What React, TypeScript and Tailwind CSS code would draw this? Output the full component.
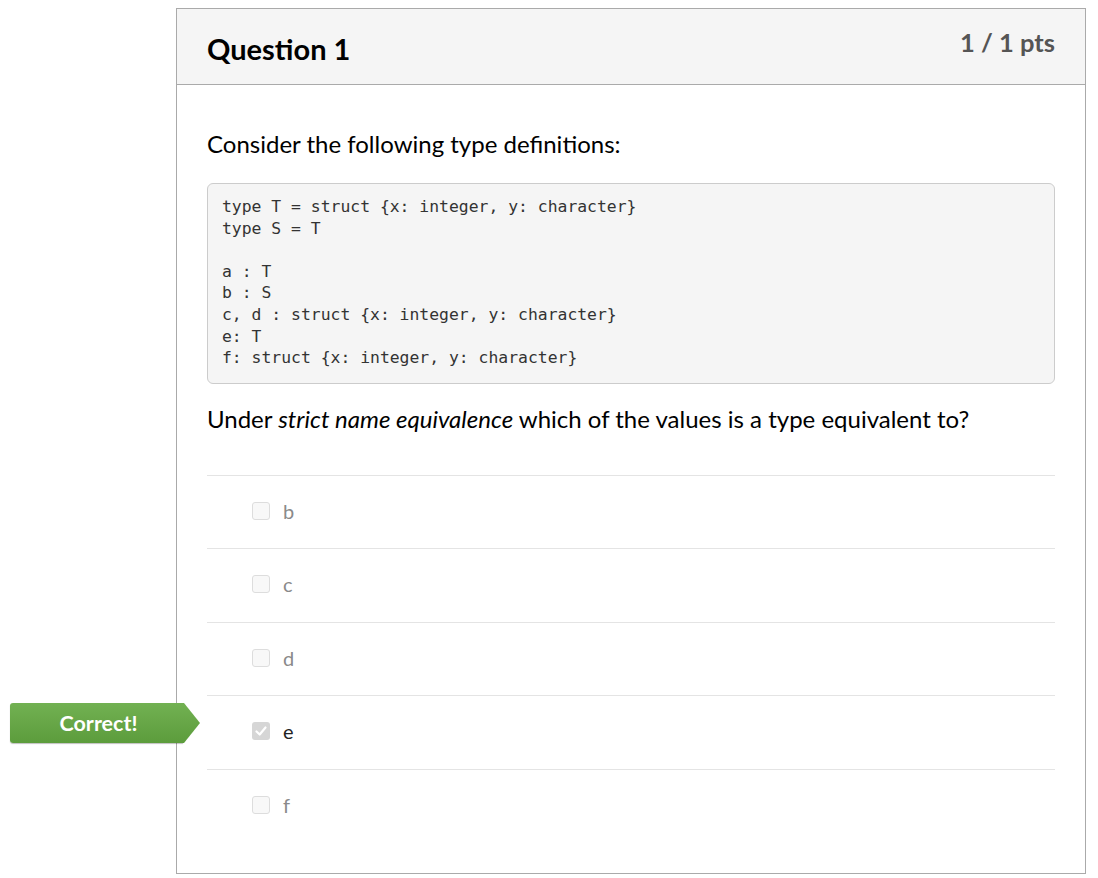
import React from 'react';

const code = `type T = struct {x: integer, y: character}
type S = T

a : T
b : S
c, d : struct {x: integer, y: character}
e: T
f: struct {x: integer, y: character}`;

const answers = [
  { label: 'b', checked: false },
  { label: 'c', checked: false },
  { label: 'd', checked: false },
  { label: 'e', checked: true },
  { label: 'f', checked: false },
];

function CorrectBadge() {
  return (
    <div className="absolute left-[-197px] top-[7px] flex h-[40px] w-[190px] items-center">
      <div className="flex h-full w-[173px] items-center justify-center rounded-l-[3px] bg-gradient-to-b from-[#72b152] to-[#5c9c3c] pl-[4px] text-[21.5px] font-bold text-white shadow-[0_1px_1px_rgba(0,0,0,0.25)]">
        Correct!
      </div>
      <svg width="17" height="40" viewBox="0 0 17 40" className="block">
        <defs>
          <linearGradient id="g" x1="0" y1="0" x2="0" y2="1">
            <stop offset="0" stopColor="#72b152" />
            <stop offset="1" stopColor="#5c9c3c" />
          </linearGradient>
        </defs>
        <polygon points="0,0 1,0 17,20 1,40 0,40" fill="url(#g)" />
      </svg>
    </div>
  );
}

export default function App() {
  return (
    <div className="min-h-screen bg-white pt-[8px] pl-[176px]" style={{ fontFamily: 'Lato, "Open Sans", sans-serif' }}>
      <div className="w-[910px] border border-[#aaaaaa] bg-white">
        {/* header */}
        <div className="flex h-[76px] items-start justify-between border-b border-[#aaaaaa] bg-[#f5f5f5] pl-[30px] pr-[30px]">
          <h2 className="mt-[22px] text-[29px] font-bold leading-[36px] text-black">Question 1</h2>
          <div className="mt-[17px] text-[25.5px] font-bold leading-[32px] text-[#555555]">1 / 1 pts</div>
        </div>

        {/* body */}
        <div className="px-[30px] pt-[44px] pb-[31px]">
          <p className="text-[24px] leading-[30px] text-black">Consider the following type definitions:</p>
          <pre
            className="mt-[24px] rounded-[6px] border border-[#cccccc] bg-[#f5f5f5] px-[14px] pt-[12px] pb-[14px] text-[16.4px] leading-[21.6px] text-[#333333]"
            style={{ fontFamily: '"DejaVu Sans Mono", "Liberation Mono", monospace' }}
          >
            {code}
          </pre>
          <p className="mt-[19px] text-[24px] leading-[32px] text-black">
            Under <i>strict name equivalence</i> which of the values is a type equivalent to?
          </p>

          <div className="mt-[40px]">
            {answers.map((a) => (
              <div
                key={a.label}
                className="relative flex h-[73.5px] items-center border-t border-[#e4e4e4] pb-[3px] pl-[45px]"
              >
                {a.checked && <CorrectBadge />}
                {a.checked ? (
                  <span className="flex h-[18px] w-[18px] items-center justify-center rounded-[3px] bg-[#d6d6d6]">
                    <svg width="12" height="12" viewBox="0 0 12 12">
                      <path d="M1.5 6.5 L4.7 9.5 L10.5 2.5" fill="none" stroke="white" strokeWidth="2.2" strokeLinecap="round" strokeLinejoin="round" />
                    </svg>
                  </span>
                ) : (
                  <span className="h-[18px] w-[18px] rounded-[3px] border border-[#dddddd] bg-[#f8f8f8]" />
                )}
                <span className={`ml-[13px] text-[20px] leading-[24px] ${a.checked ? 'text-[#222222]' : 'text-[#8a8a8a]'}`}>{a.label}</span>
              </div>
            ))}
          </div>
        </div>
      </div>
    </div>
  );
}
